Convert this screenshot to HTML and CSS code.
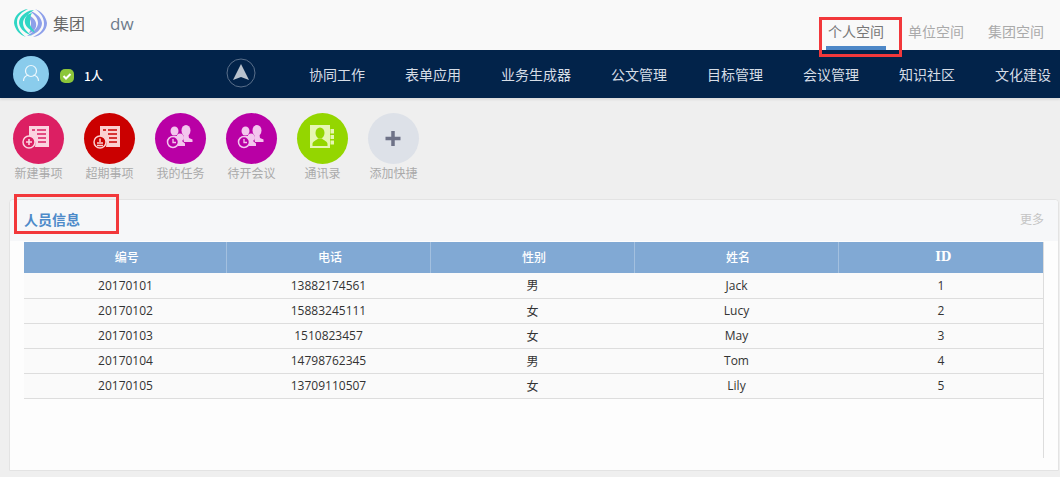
FILE: index.html
```html
<!DOCTYPE html>
<html lang="zh-CN">
<head>
<meta charset="utf-8">
<title>个人空间</title>
<link rel="stylesheet" href="styles.css">
</head>
<body>
<header class="topbar">
  <div class="brand">
    <svg class="logo" viewBox="0 0 34 32" width="34" height="32">
      <g fill="#8ea0ea" transform="rotate(180 16.500 16)">
        <path d="M14 2C6 3 0 9 0 16c1 7 6 12 12 14C6 26 3 21 3 15 3 9 8 5 14 2z"/>
        <path d="M20 3C11 4 5 10 5 16c1 7 7 10 13 13-4-4-9-7-9-13 0-5 5-9 11-13z"/>
        <path d="M18 6c-5 1-8 5-7 10 1 5 6 7 10 10-1-4-5-5-5-10 0-4 0-7 2-10z"/>
      </g>
      <g fill="#2fd6c4">
        <path d="M14 2C6 3 0 9 0 16c1 7 6 12 12 14C6 26 3 21 3 15 3 9 8 5 14 2z"/>
        <path d="M20 3C11 4 5 10 5 16c1 7 7 10 13 13-4-4-9-7-9-13 0-5 5-9 11-13z"/>
        <path d="M18 6c-5 1-8 5-7 10 1 5 6 7 10 10-1-4-5-5-5-10 0-4 0-7 2-10z"/>
      </g>
    </svg>
    <span class="brand-name">集团</span>
    <span class="brand-user">dw</span>
  </div>
  <nav class="tabs">
    <a class="tab tab-active">个人空间</a>
    <a class="tab">单位空间</a>
    <a class="tab">集团空间</a>
  </nav>
  <div class="mark mark-tab"></div>
</header>

<div class="navbar">
  <div class="user">
    <div class="avatar">
      <svg viewBox="0 0 36 36" width="36" height="36" fill="none" stroke="#eef8fd" stroke-width="1.200">
        <circle cx="18" cy="15" r="5.500"/>
        <path d="M10.500 25c0-4 3-5.500 5-6M25.500 25c0-4-3-5.500-5-6"/>
      </svg>
    </div>
    <svg class="check" viewBox="0 0 14 14" width="14" height="14">
      <rect width="14" height="14" rx="5" fill="#8cc63a"/>
      <path d="M3.500 7l2.500 2.500 4.500-4.500" fill="none" stroke="#fff" stroke-width="2"/>
    </svg>
    <span class="count">1人</span>
  </div>
  <div class="compass">
    <svg viewBox="0 0 30 30" width="30" height="30">
      <circle cx="15" cy="15" r="14" fill="none" stroke="#5a6f8a"/>
      <path d="M15 6l8 16-8-3-8 3z" fill="#b9c2cd"/>
    </svg>
  </div>
  <nav class="menu">
    <a>协同工作</a><a>表单应用</a><a>业务生成器</a><a>公文管理</a><a>目标管理</a><a>会议管理</a><a>知识社区</a><a>文化建设</a>
  </nav>
</div>

<section class="shortcuts">
  <div class="shortcut">
    <div class="circle c-pink">
      <svg viewBox="0 0 51 51" width="51" height="51">
        <path d="M16 13h20v21H22a8 8 0 0 0-6-11z" fill="#fbd3e0"/>
        <path d="M19 17h3M24 17h9M24 21h9M25 25h8M25 29h8" stroke="#dc1f63" stroke-width="1.400"/>
        <circle cx="16" cy="29" r="6" fill="#dc1f63" stroke="#fbd3e0" stroke-width="1.500"/>
        <path d="M13 29h6M16 26v6" stroke="#fbd3e0" stroke-width="1.600"/>
      </svg>
    </div>
    <span>新建事项</span>
  </div>
  <div class="shortcut">
    <div class="circle c-red">
      <svg viewBox="0 0 51 51" width="51" height="51">
        <path d="M16 13h20v21H22a8 8 0 0 0-6-11z" fill="#fbd0d0"/>
        <path d="M19 17h3M24 17h9M24 21h9M25 25h8M25 29h8" stroke="#cb0000" stroke-width="1.400"/>
        <circle cx="16" cy="29" r="6" fill="#cb0000" stroke="#fbd0d0" stroke-width="1.500"/>
        <path d="M16 25.500v3.500M13 30h6M13 32.500h6" stroke="#fbd0d0" stroke-width="1.500"/>
      </svg>
    </div>
    <span>超期事项</span>
  </div>
  <div class="shortcut">
    <div class="circle c-purple">
      <svg viewBox="0 0 51 51" width="51" height="51">
        <g fill="#f3c6ee">
          <ellipse cx="19.500" cy="18" rx="4" ry="4.500"/>
          <path d="M15 23h8l2 2-1 4h-3a7 7 0 0 0-6-6z"/>
          <ellipse cx="31" cy="17.500" rx="4.500" ry="5.500"/>
          <path d="M28.500 22h5l.5 3 3.500 1.500V29H29l-1-4z"/>
          <ellipse cx="25" cy="24.500" rx="3.500" ry="4"/>
          <path d="M23 28h4l3 2.500V33h-7z"/>
        </g>
        <circle cx="18" cy="29" r="5.500" fill="#b900a5" stroke="#f3c6ee" stroke-width="1.500"/>
        <path d="M18 26v3.500h3" fill="none" stroke="#f3c6ee" stroke-width="1.300"/>
      </svg>
    </div>
    <span>我的任务</span>
  </div>
  <div class="shortcut">
    <div class="circle c-purple">
      <svg viewBox="0 0 51 51" width="51" height="51">
        <g fill="#f3c6ee">
          <ellipse cx="19.500" cy="18" rx="4" ry="4.500"/>
          <path d="M15 23h8l2 2-1 4h-3a7 7 0 0 0-6-6z"/>
          <ellipse cx="31" cy="17.500" rx="4.500" ry="5.500"/>
          <path d="M28.500 22h5l.5 3 3.500 1.500V29H29l-1-4z"/>
          <ellipse cx="25" cy="24.500" rx="3.500" ry="4"/>
          <path d="M23 28h4l3 2.500V33h-7z"/>
        </g>
        <circle cx="18" cy="29" r="5.500" fill="#b900a5" stroke="#f3c6ee" stroke-width="1.500"/>
        <path d="M18 26v3.500h3" fill="none" stroke="#f3c6ee" stroke-width="1.300"/>
      </svg>
    </div>
    <span>待开会议</span>
  </div>
  <div class="shortcut">
    <div class="circle c-green">
      <svg viewBox="0 0 51 51" width="51" height="51">
        <rect x="13" y="12" width="20" height="23" fill="#e6f6b4"/>
        <rect x="33.500" y="16" width="3.500" height="4.500" fill="#e6f6b4"/>
        <rect x="33.500" y="22" width="3.500" height="4" fill="#e6f6b4"/>
        <rect x="33.500" y="27.500" width="3.500" height="4" fill="#e6f6b4"/>
        <ellipse cx="23" cy="20" rx="4.500" ry="5.500" fill="#94d600"/>
        <path d="M15.500 33v-2c0-3 4-3.500 5.500-5.500h4c1.500 2 5.500 2.500 5.500 5.500v2z" fill="#94d600"/>
      </svg>
    </div>
    <span>通讯录</span>
  </div>
  <div class="shortcut">
    <div class="circle c-grey">
      <svg viewBox="0 0 51 51" width="51" height="51">
        <path d="M25 18v15M17.500 25.500h15" stroke="#6e7287" stroke-width="3.500"/>
      </svg>
    </div>
    <span>添加快捷</span>
  </div>
</section>

<section class="card">
  <div class="card-head">
    <h2 class="card-title">人员信息</h2>
    <a class="card-more">更多</a>
  </div>
  <div class="mark mark-title"></div>
  <div class="card-body">
    <table class="grid">
      <thead>
        <tr><th>编号</th><th>电话</th><th>性别</th><th>姓名</th><th class="th-id">ID</th></tr>
      </thead>
      <tbody>
        <tr><td>20170101</td><td>13882174561</td><td>男</td><td>Jack</td><td>1</td></tr>
        <tr><td>20170102</td><td>15883245111</td><td>女</td><td>Lucy</td><td>2</td></tr>
        <tr><td>20170103</td><td>1510823457</td><td>女</td><td>May</td><td>3</td></tr>
        <tr><td>20170104</td><td>14798762345</td><td>男</td><td>Tom</td><td>4</td></tr>
        <tr><td>20170105</td><td>13709110507</td><td>女</td><td>Lily</td><td>5</td></tr>
      </tbody>
    </table>
  </div>
</section>
</body>
</html>
```
FILE: styles.css
```css
* { box-sizing: border-box; }
html, body { margin: 0; height: 100%; overflow: hidden; }
body {
  background: #efefef;
  font-family: "Noto Sans CJK SC", "Open Sans", sans-serif;
  font-size: 12px;
  position: relative;
}
.mark { position: absolute; border: 3px solid #f2383b; pointer-events: none; }
.mark-tab { left: 819px; top: 17px; width: 83px; height: 40px; z-index: 5; }
.mark-title { left: 14px; top: 194px; width: 105px; height: 40px; z-index: 5; }

.topbar {
  height: 50px;
  background: #f9f9f9;
  display: flex;
  justify-content: space-between;
}
.brand { display: flex; align-items: center; padding: 0 0 4px 14px; }
.logo { margin-right: 5px; }
.brand-name { font-size: 16px; color: #666; width: 57px; }
.brand-user { font-size: 17px; color: #6f7c8c; font-family: "Open Sans", sans-serif; }
.tabs { display: flex; gap: 20px; padding: 20px 14px 0 0; }
.tab {
  width: 60px;
  height: 30px;
  font-size: 14px;
  line-height: 22px;
  text-align: center;
  color: #aaa;
}
.tab-active { color: #777; border-bottom: 4px solid #4d87c7; }

.navbar {
  height: 48px;
  background: #02234a;
  display: flex;
  align-items: center;
  box-shadow: 0 2px 2px #dcdcdc;
  position: relative;
}
.user { display: flex; align-items: center; width: 226px; padding-left: 13px; }
.avatar { width: 36px; height: 36px; border-radius: 50%; background: #8accec; }
.check { margin: 4px 0 0 11px; }
.count { margin: 3px 0 0 10px; color: #fff; font-size: 12px; font-weight: 500; }
.compass { width: 83px; height: 30px; margin-top: -2px; }
.menu { display: flex; gap: 40px; color: #d6dde6; font-size: 14px; white-space: nowrap; }

.shortcuts { display: flex; gap: 20px; padding: 15px 0 0 13px; height: 101px; }
.shortcut { width: 51px; display: flex; flex-direction: column; align-items: center; }
.shortcut span { color: #aaa; font-size: 12px; line-height: 18px; white-space: nowrap; }
.circle { width: 51px; height: 51px; border-radius: 50%; }
.circle svg { display: block; }
.c-pink { background: #dc1f63; }
.c-red { background: #cb0000; }
.c-purple { background: #b900a5; }
.c-green { background: #94d600; }
.c-grey { background: #dde1e8; }

.card {
  margin: 0 1px 0 9px;
  height: 272px;
  background: #fdfdfd;
  border: 1px solid #e3e3e3;
  border-radius: 4px 4px 0 0;
}
.card-head {
  height: 41px;
  background: #f6f7f9;
  display: flex;
  justify-content: space-between;
  align-items: center;
  padding: 0 14px 4px 14px;
  border-radius: 4px 4px 0 0;
}
.card-title { margin: 0; font-size: 14px; font-weight: 700; color: #4d8ac9; }
.card-more { color: #c4c4c4; font-size: 12px; }
.card-body { margin: 1px 14px 0 14px; height: 216px; border-right: 1px solid #ddd; }
.grid { width: 100%; border-collapse: collapse; table-layout: fixed; }
.grid th {
  width: 204px;
  height: 31px;
  background: #81a9d4;
  color: #fff;
  font-size: 12px;
  font-weight: 500;
  text-align: center;
  padding: 0 0 2px 4px;
  border-left: 1px solid #a3c0df;
}
.grid th:first-child { width: 202px; border-left: 0; }
.grid th.th-id { width: auto; font-family: "DejaVu Serif", serif; font-weight: 700; padding-left: 5px; }
.grid td {
  height: 25px;
  padding: 0 0 0 1px;
  background: #fafafa;
  color: #333;
  font-size: 12px;
  font-family: "Open Sans", "Noto Sans CJK SC", sans-serif;
  text-align: center;
  border-bottom: 1px solid #ddd;
}
```
